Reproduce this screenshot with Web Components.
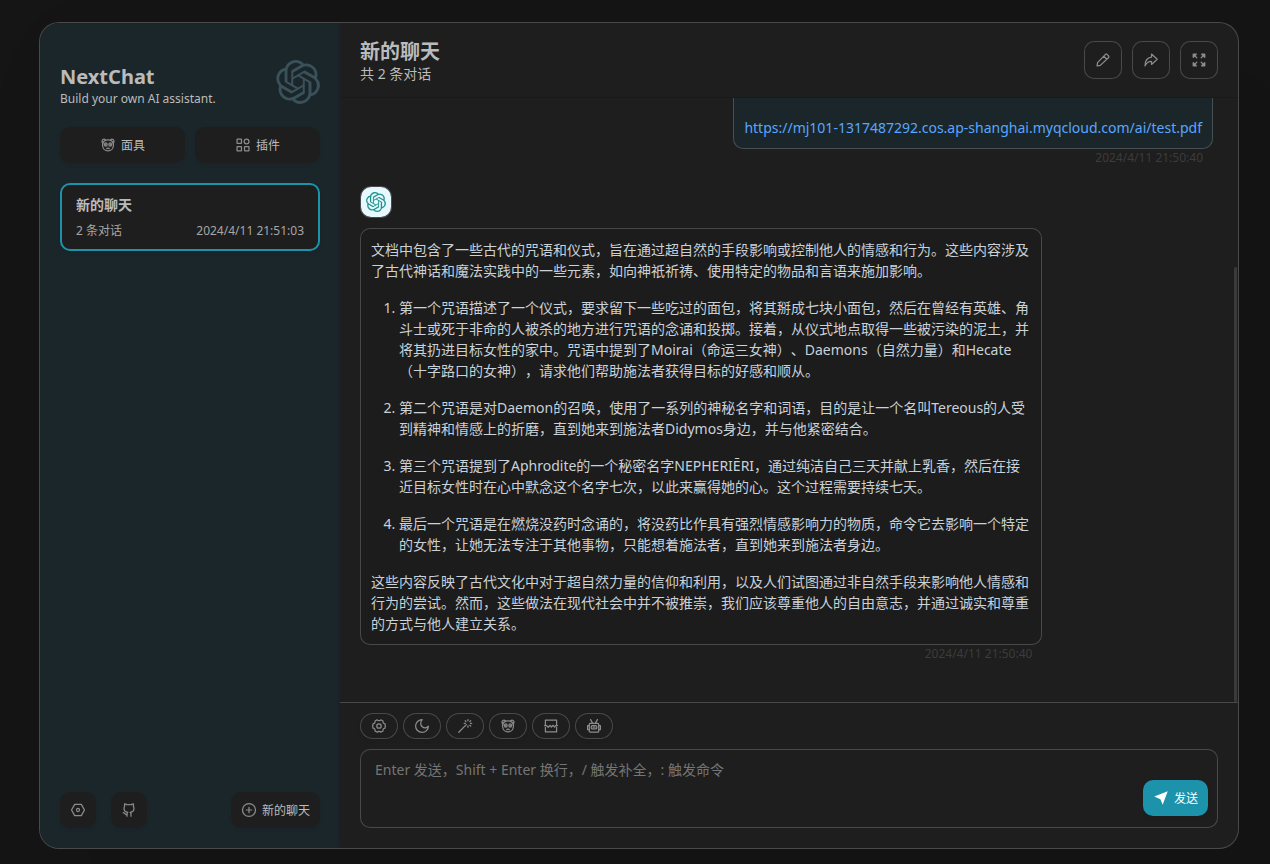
<!DOCTYPE html>
<html lang="zh-CN">
<head>
<meta charset="utf-8">
<meta name="viewport" content="width=device-width, initial-scale=1">
<title>NextChat</title>
<style>
:root {
  --white: rgb(30, 30, 30);
  --black: rgb(187, 187, 187);
  --gray: rgb(21, 21, 21);
  --second: rgb(27, 38, 42);
  --primary: rgb(29, 147, 171);
  --border: 1px solid rgba(255, 255, 255, 0.192);
  --card-shadow: 0 2px 4px 0 rgba(0, 0, 0, 0.05);
}
html, body { height: 100%; margin: 0; }
body {
  box-sizing: border-box;
  padding: 22px 31px 15px 39px;
  overflow: hidden;
  background: var(--gray);
  color: var(--black);
  font-family: "Noto Sans", "Noto Sans CJK SC", sans-serif;
  font-size: 14px;
  text-spacing-trim: space-all;
}
</style>
</head>
<body>
<chat-app></chat-app>
<script>
const ICONS = {
  mask: '<path d="M2.500 6.400C1 5.200.900 2.600 2.300 1.800c1.300-.7 2.800-.2 3.300.8M13.500 6.400C15 5.200 15.100 2.600 13.700 1.800c-1.300-.7-2.800-.2-3.300.8M5.600 2.600c1.500-.5 3.300-.5 4.800 0 2.500.9 3.900 3 3.700 5.600-.2 3.800-2.700 6.500-6.100 6.500s-5.900-2.700-6.100-6.500C1.700 5.600 3.100 3.500 5.600 2.600z"/><ellipse cx="5.500" cy="7.500" rx="1.500" ry="1.900"/><ellipse cx="10.500" cy="7.500" rx="1.500" ry="1.900"/><path d="M5.500 7v1M10.500 7v1M6.600 12.200c.4-.8 2.400-.8 2.800 0"/>',
  plugin: '<rect x="1.300" y="1.300" width="5" height="5" rx=".5"/><circle cx="12" cy="4" r="2.700"/><rect x="1.300" y="9.700" width="5" height="5" rx=".5"/><rect x="9.700" y="9.700" width="5" height="5" rx=".5"/>',
  hex: '<path d="M4.300 1.700h7.400L15.300 8l-3.600 6.300H4.300L.7 8z"/><circle cx="8" cy="8" r="1.700"/>',
  github: '<path d="M5.800 14.900v-2.400c0-.8.3-1.400.8-1.900C3.900 10.300 2.400 9 2.400 6.400c0-1 .2-1.800.7-2.400C2.800 3 2.800 2 3.100 1c1 0 2 .5 2.600 1.100 1.500-.3 3.100-.3 4.600 0C10.900 1.500 11.900 1 12.900 1c.3 1 .3 2 0 3 .5.600.7 1.400.7 2.400 0 2.600-1.500 3.900-4.200 4.200.5.500.8 1.100.8 1.900v2.400M5.800 13.300c-2.500.6-2.300-2.200-4.300-2.300"/>',
  add: '<circle cx="8" cy="8" r="7.300"/><path d="M8 5v6M5 8h6"/>',
  edit: '<path d="M1.300 14.700l.6-3.700L10.800 1.700c.5-.5 1.200-.5 1.700 0l1.800 1.800c.5.5.5 1.200 0 1.700L5 14.100zM8.900 3.800l3.300 3.300"/>',
  share: '<path d="M8.600 1.300l6.400 5.900-6.400 5.800V9.700C5.500 9.500 3 11.200 1.300 14.700 1.200 9 4 5.200 8.600 4.700z"/>',
  full: '<path d="M1.500 5V1.500H5zM11 1.500h3.500V5zM1.500 11v3.500H5zM11 14.500h3.500V11z" fill="currentColor"/><path d="M2 2l3.500 3.500M14 2l-3.500 3.500M2 14l3.500-3.500M14 14l-3.500-3.500"/>',
  gear: '<path d="M6 1c.6 1.300 3.400 1.300 4 0l2.500 1.300c-.5 1.700.5 3.100 2.300 3.300.4 1.600.4 3.200 0 4.800-1.800.2-2.800 1.600-2.300 3.300L10 15c-.6-1.300-3.400-1.300-4 0l-2.500-1.300c.5-1.700-.5-3.100-2.300-3.300-.4-1.600-.4-3.200 0-4.800 1.800-.2 2.800-1.600 2.300-3.300z"/><circle cx="8" cy="8" r="2.500"/>',
  moon: '<path d="M8.300.8C4.200.8.8 4 .8 8s3.200 7.200 7.200 7.200 7.200-3.100 7.200-7.100c-2 2.500-5 2.500-6.900.8C6 6.900 5.900 3.400 8.300.8z"/>',
  wand: '<path d="M1 15l8.500-8.500M11.300.7v1.400M11.300 7.900v1.400M7 5h1.400M14.200 5h1.400M8.200 2l.9.9M14.400 2l-.9.9M14.400 8l-.9-.9"/>',
  split: '<path d="M1.700 6.500V1.300h12.600v5.200M.7 7.500H3l1.900 1.900L7 7.400l1.500 1.700 1.900-1.900 1.700 2 1.200-1.700h2M1.700 9.500v5.200h12.600V9.500"/>',
  robot: '<rect x="2.700" y="5" width="10.600" height="9.900" rx="1"/><path d="M2.700 7.500H.8v4.500h1.900M13.300 7.500h1.900v4.500h-1.900M6.500 5L4.200.8M9.500 5l2.300-4.200"/><rect x="4.900" y="7.500" width="6.200" height="3.800" rx="1.400"/><path d="M7 9.400h2"/>',
  send: '<path d="M15.600 .4L9.900 15.600 7.300 9.300 .4 6.300z" fill="currentColor" stroke="none"/>',
  openai: '<path d="M22.2819 9.8211a5.9847 5.9847 0 0 0-.5157-4.9108 6.0462 6.0462 0 0 0-6.5098-2.9A6.0651 6.0651 0 0 0 4.9807 4.1818a5.9847 5.9847 0 0 0-3.9977 2.9 6.0462 6.0462 0 0 0 .7427 7.0966 5.98 5.98 0 0 0 .511 4.9107 6.051 6.051 0 0 0 6.5146 2.9001A5.9847 5.9847 0 0 0 13.2599 24a6.0557 6.0557 0 0 0 5.7718-4.2058 5.9894 5.9894 0 0 0 3.9977-2.9001 6.0557 6.0557 0 0 0-.7475-7.0729zm-9.022 12.6081a4.4755 4.4755 0 0 1-2.8764-1.0408l.1419-.0804 4.7783-2.7582a.7948.7948 0 0 0 .3927-.6813v-6.7369l2.02 1.1686a.071.071 0 0 1 .038.052v5.5826a4.504 4.504 0 0 1-4.4945 4.4944zm-9.6607-4.1254a4.4708 4.4708 0 0 1-.5346-3.0137l.142.0852 4.783 2.7582a.7712.7712 0 0 0 .7806 0l5.8428-3.3685v2.3324a.0804.0804 0 0 1-.0332.0615L9.74 19.9502a4.4992 4.4992 0 0 1-6.1408-1.6464zM2.3408 7.8956a4.485 4.485 0 0 1 2.3655-1.9728V11.6a.7664.7664 0 0 0 .3879.6765l5.8144 3.3543-2.0201 1.1685a.0757.0757 0 0 1-.071 0l-4.8303-2.7865A4.504 4.504 0 0 1 2.3408 7.872zm16.5963 3.8558L13.1038 8.364 15.1192 7.2a.0757.0757 0 0 1 .071 0l4.8303 2.7913a4.4944 4.4944 0 0 1-.6765 8.1042v-5.6772a.79.79 0 0 0-.407-.667zm2.0107-3.0231l-.142-.0852-4.7735-2.7818a.7759.7759 0 0 0-.7854 0L9.409 9.2297V6.8974a.0662.0662 0 0 1 .0284-.0615l4.8303-2.7866a4.4992 4.4992 0 0 1 6.6802 4.66zM8.3065 12.863l-2.02-1.1638a.0804.0804 0 0 1-.038-.0567V6.0742a4.4992 4.4992 0 0 1 7.3757-3.4537l-.142.0805L8.704 5.459a.7948.7948 0 0 0-.3927.6813zm1.0976-2.3654l2.602-1.4998 2.6069 1.4998v2.9994l-2.5974 1.4997-2.6067-1.4997Z" fill="currentColor" stroke="none"/>'
};

function define(name, render) {
  customElements.define(name, class extends HTMLElement {
    constructor() {
      super();
      this.attachShadow({ mode: "open" });
    }
    connectedCallback() {
      const template = document.createElement("template");
      template.innerHTML = render(this);
      this.shadowRoot.replaceChildren(template.content.cloneNode(true));
    }
  });
}

define("ui-icon", el => {
  const name = el.getAttribute("name");
  const box = name === "openai" ? "0 0 24 24" : "-1 -1 18 18";
  return `<style>
    :host { display: block; flex: none; width: 16px; height: 16px; color: #8c8c8c; }
    svg { display: block; width: 100%; height: 100%; }
  </style>
  <svg viewBox="${box}" fill="none" stroke="currentColor" stroke-width="1.4" stroke-linejoin="round" stroke-linecap="round" aria-hidden="true">${ICONS[name]}</svg>`;
});

/* variants: (default) filled, outline, pill, primary */
define("ui-button", el => `<style>
    :host { display: block; }
    button {
      box-sizing: border-box; width: 100%; height: 36px; margin: 0; padding: 0 10px;
      display: flex; align-items: center; justify-content: center; gap: 5px;
      border: 0; border-radius: 10px; background: var(--white); color: inherit;
      font: inherit; font-size: 12px; line-height: 18px; white-space: nowrap;
      box-shadow: var(--card-shadow); cursor: pointer;
    }
    span { padding-top: 2px; }
    span:empty { display: none; }
    :host([label]) span { display: none; }
    :host([variant="outline"]) button { width: 38px; height: 38px; border: var(--border); box-shadow: none; }
    :host([variant="pill"]) button { width: 38px; height: 26px; border: var(--border); border-radius: 20px; }
    :host([variant="primary"]) button { background: var(--primary); color: #fff; }
    :host([variant="primary"]) ui-icon { color: #fff; }
  </style>
  <button type="button" aria-label="${el.getAttribute("label") || el.textContent.trim()}"><ui-icon name="${el.getAttribute("icon")}"></ui-icon><span><slot></slot></span></button>`);

define("chat-card", () => `<style>
    :host {
      box-sizing: border-box; display: flex; flex-direction: column; gap: 6px;
      padding: 10px 14px 8px; border: 2px solid var(--primary); border-radius: 10px;
      background: var(--white); box-shadow: var(--card-shadow);
    }
    h3 { margin: 0; font-size: 14px; line-height: 20px; font-weight: 700; }
    .info { display: flex; justify-content: space-between; font-size: 12px; line-height: 20px; color: #a6a6a6; }
  </style>
  <h3><slot name="title"></slot></h3>
  <div class="info"><slot name="count"></slot><slot name="date"></slot></div>`);

define("chat-sidebar", () => `<style>
    :host {
      box-sizing: border-box; width: 300px; flex: none; padding: 20px;
      display: flex; flex-direction: column; background: var(--second);
      box-shadow: inset -2px 0 2px 0 rgba(0, 0, 0, 0.05);
    }
    header { display: flex; justify-content: space-between; padding: 17px 0 20px; }
    h1 { margin: 0; padding-top: 3px; font-size: 20px; line-height: 27px; font-weight: 700; }
    p { margin: 0; font-size: 12px; line-height: 17px; }
    .logo { width: 44px; height: 44px; color: #3a515a; }
    .tools { display: grid; grid-template-columns: 1fr 1fr; gap: 10px; margin-bottom: 20px; }
    main { flex: 1; }
    footer { display: flex; gap: 15px; }
    .square { width: 36px; }
    .new { margin-left: auto; }
  </style>
  <header>
    <div><h1>NextChat</h1><p>Build your own AI assistant.</p></div>
    <ui-icon class="logo" name="openai"></ui-icon>
  </header>
  <div class="tools">
    <ui-button icon="mask">面具</ui-button>
    <ui-button icon="plugin">插件</ui-button>
  </div>
  <main>
    <chat-card>
      <span slot="title">新的聊天</span>
      <span slot="count">2 条对话</span>
      <span slot="date">2024/4/11 21:51:03</span>
    </chat-card>
  </main>
  <footer>
    <ui-button class="square" icon="hex" label="设置"></ui-button>
    <ui-button class="square" icon="github" label="GitHub"></ui-button>
    <ui-button class="new" icon="add">新的聊天</ui-button>
  </footer>`);

define("chat-header", () => `<style>
    :host {
      display: flex; align-items: center; justify-content: space-between;
      padding: 14px 20px; border-bottom: 1px solid rgba(0, 0, 0, 0.1);
    }
    h2 { margin: 0; padding-top: 2px; font-size: 20px; line-height: 25px; font-weight: 700; }
    p { margin: 0; font-size: 14px; line-height: 19px; }
    nav { display: flex; gap: 10px; }
  </style>
  <div><h2>新的聊天</h2><p>共 2 条对话</p></div>
  <nav>
    <ui-button variant="outline" icon="edit" label="编辑"></ui-button>
    <ui-button variant="outline" icon="share" label="分享"></ui-button>
    <ui-button variant="outline" icon="full" label="全屏"></ui-button>
  </nav>`);

define("chat-message", el => `<style>
    :host { display: flex; flex-direction: column; align-items: flex-start; flex: none; }
    :host([user]) { align-items: flex-end; }
    .avatar {
      box-sizing: border-box; width: 32px; height: 32px; margin-bottom: 10px;
      display: flex; align-items: center; justify-content: center;
      border: var(--border); border-radius: 11px; background: #e7f8ff; background-clip: padding-box;
    }
    .avatar ui-icon { width: 20px; height: 20px; color: #1f948c; }
    .body { max-width: 80%; display: flex; flex-direction: column; align-items: flex-end; }
    .bubble {
      box-sizing: border-box; padding: 10px; border: var(--border); border-radius: 10px;
      background: rgba(0, 0, 0, 0.05); color: #c9d1d9; font-size: 14px; line-height: 21px;
    }
    :host([user]) .bubble { background: var(--second); padding-top: 60px; }
    time { padding-right: 10px; font-size: 12px; line-height: 17px; color: #3c3c3c; }
  </style>
  ${el.hasAttribute("user") ? "" : '<div class="avatar"><ui-icon name="openai"></ui-icon></div>'}
  <div class="body">
    <div class="bubble"><slot></slot></div>
    <time>${el.getAttribute("date")}</time>
  </div>`);

define("chat-log", () => `<style>
    :host {
      position: relative; flex: 1; min-height: 0; padding: 20px 25px 40px 20px; overflow: hidden;
      display: flex; flex-direction: column; justify-content: flex-end; gap: 20px;
    }
    a { color: #58a6ff; text-decoration: none; }
    p, ol { margin: 0 0 16px; }
    p:last-child { margin-bottom: 0; }
    ol { padding-left: 28px; }
    li + li { margin-top: 16px; }
    .thumb {
      position: absolute; right: 1px; bottom: 0; width: 3px; height: 72%;
      border-radius: 20px; background: #3a3a3a;
    }
  </style>
  <chat-message user date="2024/4/11 21:50:40"><a href="https://mj101-1317487292.cos.ap-shanghai.myqcloud.com/ai/test.pdf">https://mj101-1317487292.cos.ap-shanghai.myqcloud.com/ai/test.pdf</a></chat-message>
  <chat-message date="2024/4/11 21:50:40">
    <p>文档中包含了一些古代的咒语和仪式，旨在通过超自然的手段影响或控制他人的情感和行为。这些内容涉及了古代神话和魔法实践中的一些元素，如向神祇祈祷、使用特定的物品和言语来施加影响。</p>
    <ol>
      <li>第一个咒语描述了一个仪式，要求留下一些吃过的面包，将其掰成七块小面包，然后在曾经有英雄、角斗士或死于非命的人被杀的地方进行咒语的念诵和投掷。接着，从仪式地点取得一些被污染的泥土，并将其扔进目标女性的家中。咒语中提到了Moirai（命运三女神）、Daemons（自然力量）和Hecate（十字路口的女神），请求他们帮助施法者获得目标的好感和顺从。</li>
      <li>第二个咒语是对Daemon的召唤，使用了一系列的神秘名字和词语，目的是让一个名叫Tereous的人受到精神和情感上的折磨，直到她来到施法者Didymos身边，并与他紧密结合。</li>
      <li>第三个咒语提到了Aphrodite的一个秘密名字NEPHERIĒRI，通过纯洁自己三天并献上乳香，然后在接近目标女性时在心中默念这个名字七次，以此来赢得她的心。这个过程需要持续七天。</li>
      <li>最后一个咒语是在燃烧没药时念诵的，将没药比作具有强烈情感影响力的物质，命令它去影响一个特定的女性，让她无法专注于其他事物，只能想着施法者，直到她来到施法者身边。</li>
    </ol>
    <p>这些内容反映了古代文化中对于超自然力量的信仰和利用，以及人们试图通过非自然手段来影响他人情感和行为的尝试。然而，这些做法在现代社会中并不被推崇，我们应该尊重他人的自由意志，并通过诚实和尊重的方式与他人建立关系。</p>
  </chat-message>
  <div class="thumb"></div>`);

define("chat-composer", () => `<style>
    :host { display: block; padding: 10px 20px 20px; border-top: var(--border); box-shadow: var(--card-shadow); }
    .actions { display: flex; gap: 5px; margin-bottom: 10px; }
    .field { position: relative; display: flex; }
    textarea {
      box-sizing: border-box; width: 100%; height: 79px; margin: 0; padding: 10px 90px 10px 14px;
      border: var(--border); border-radius: 10px; outline: none; resize: none;
      background: var(--white); color: var(--black); font: inherit; font-size: 14px; line-height: 20px;
    }
    textarea::placeholder { color: #757575; }
    .send { position: absolute; right: 10px; bottom: 12px; }
  </style>
  <div class="actions">
    <ui-button variant="pill" icon="gear" label="对话设置"></ui-button>
    <ui-button variant="pill" icon="moon" label="深色模式"></ui-button>
    <ui-button variant="pill" icon="wand" label="快捷指令"></ui-button>
    <ui-button variant="pill" icon="mask" label="所有面具"></ui-button>
    <ui-button variant="pill" icon="split" label="清除聊天"></ui-button>
    <ui-button variant="pill" icon="robot" label="选择模型"></ui-button>
  </div>
  <div class="field">
    <textarea aria-label="输入消息" placeholder="Enter 发送，Shift + Enter 换行，/ 触发补全，: 触发命令"></textarea>
    <ui-button class="send" variant="primary" icon="send">发送</ui-button>
  </div>`);

define("chat-app", () => `<style>
    :host {
      box-sizing: border-box; display: flex; height: 100%; overflow: hidden;
      border: var(--border); border-radius: 20px; background: var(--white);
      box-shadow: 50px 50px 100px 10px rgba(0, 0, 0, 0.1);
    }
    section { flex: 1; min-width: 0; display: flex; flex-direction: column; }
  </style>
  <chat-sidebar></chat-sidebar>
  <section>
    <chat-header></chat-header>
    <chat-log></chat-log>
    <chat-composer></chat-composer>
  </section>`);
</script>
</body>
</html>
